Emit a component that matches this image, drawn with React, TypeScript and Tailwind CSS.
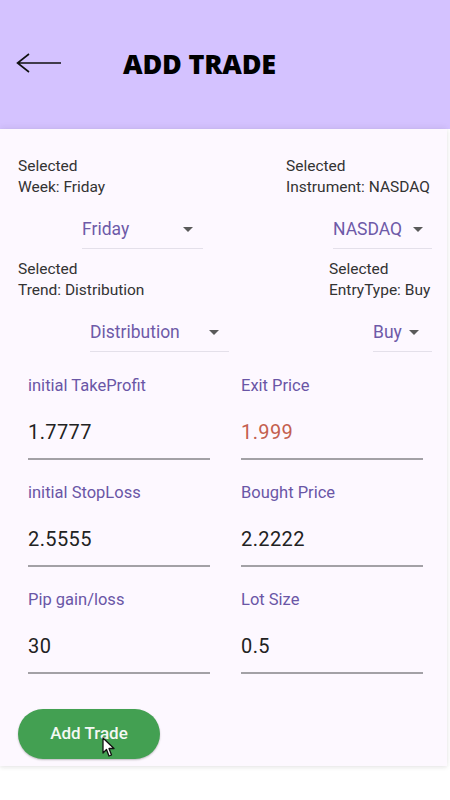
import React from "react";

const FIELDS = [
  { label: "initial TakeProfit", value: "1.7777" },
  { label: "Exit Price", value: "1.999", red: true },
  { label: "initial StopLoss", value: "2.5555" },
  { label: "Bought Price", value: "2.2222" },
  { label: "Pip gain/loss", value: "30" },
  { label: "Lot Size", value: "0.5" },
];

function Caret() {
  return (
    <svg width="10" height="5" viewBox="0 0 10 5" className="shrink-0">
      <path d="M0 0 L10 0 L5 5 Z" fill="#5a5a5a" />
    </svg>
  );
}

function Dropdown({ value, width, gap }: { value: string; width: string; gap: string }) {
  return (
    <div className={`h-[51px] pt-[12px] flex items-center border-b border-[#e4e0ea] ${width}`}>
      <span className="text-[17.5px] text-[#6e5aa8]">{value}</span>
      <span className={gap} />
      <Caret />
    </div>
  );
}

function Cursor() {
  return (
    <svg width="14" height="21" viewBox="0 0 14 21" className="absolute left-[84px] top-[28px]">
      <path d="M1 1 L1 16 L4.5 12.5 L7 19 L9.5 18 L7 11.5 L12 11.5 Z" fill="#fff" stroke="#111" strokeWidth="1.3" strokeLinejoin="round" />
    </svg>
  );
}

export default function App() {
  return (
    <div className="w-[450px] h-[800px] bg-white overflow-hidden" style={{ fontFamily: "Roboto, 'Noto Sans', sans-serif" }}>
      <header className="h-[129px] bg-[#d4c2ff] flex items-center pl-[16px] pb-[1px]">
        <svg width="46" height="22" viewBox="0 0 46 22" className="mt-[-2px]">
          <path d="M45 11 H1.5 M13 2 L1.5 11 L13 20" fill="none" stroke="#111" strokeWidth="1.6" />
        </svg>
        <h1
          className="ml-[61px] text-[27px] font-extrabold tracking-[-0.2px] text-black"
          style={{ fontFamily: "'Open Sans', sans-serif" }}
        >
          ADD TRADE
        </h1>
      </header>

      <main className="h-[637px] mr-[3px] bg-[#fdf8ff] shadow-[0_-2px_6px_rgba(0,0,0,0.06),0_2px_4px_rgba(0,0,0,0.08)] px-[18px] pt-[27px] text-[#333]">
        <div className="flex justify-between text-[15.5px] leading-[21px]">
          <div>
            <p>Selected</p>
            <p>Week: Friday</p>
          </div>
          <div className="w-[146px] mr-[-3px] whitespace-nowrap">
            <p>Selected</p>
            <p>Instrument: NASDAQ</p>
          </div>
        </div>
        <div className="flex justify-between">
          <div className="ml-[64px]">
            <Dropdown value="Friday" width="w-[121px]" gap="ml-[54px]" />
          </div>
          <div className="mr-[-3px]">
            <Dropdown value="NASDAQ" width="w-[99px]" gap="ml-[11px]" />
          </div>
        </div>

        <div className="flex justify-between mt-[10px] text-[15.5px] leading-[21px]">
          <div>
            <p>Selected</p>
            <p>Trend: Distribution</p>
          </div>
          <div className="w-[103px] mr-[-3px] whitespace-nowrap">
            <p>Selected</p>
            <p>EntryType: Buy</p>
          </div>
        </div>
        <div className="flex justify-between">
          <div className="ml-[72px]">
            <Dropdown value="Distribution" width="w-[139px]" gap="ml-[29px]" />
          </div>
          <div className="mr-[-3px]">
            <Dropdown value="Buy" width="w-[59px]" gap="ml-[7px]" />
          </div>
        </div>

        <div className="grid grid-cols-[182px_182px] gap-x-[31px] gap-y-[21px] ml-[10px] mt-[22px]">
          {FIELDS.map((f) => (
            <div key={f.label} className="border-b-2 border-[#a3a1a6]">
              <p className="text-[16.5px] leading-[24px] text-[#6a56a6]">{f.label}</p>
              <p className={`mt-[20px] mb-[12px] text-[20px] leading-[28px] tracking-[0.4px] ${f.red ? "text-[#c45f4f]" : "text-[#222]"}`}>
                {f.value}
              </p>
            </div>
          ))}
        </div>

        <div className="relative mt-[35px] w-[142px]">
          <button className="w-[142px] h-[50px] rounded-full bg-[#43a052] text-[#f4f8f4] text-[17px] font-medium shadow-[0_1px_2px_rgba(0,0,0,0.25)]">
            Add Trade
          </button>
          <Cursor />
        </div>
      </main>
    </div>
  );
}
